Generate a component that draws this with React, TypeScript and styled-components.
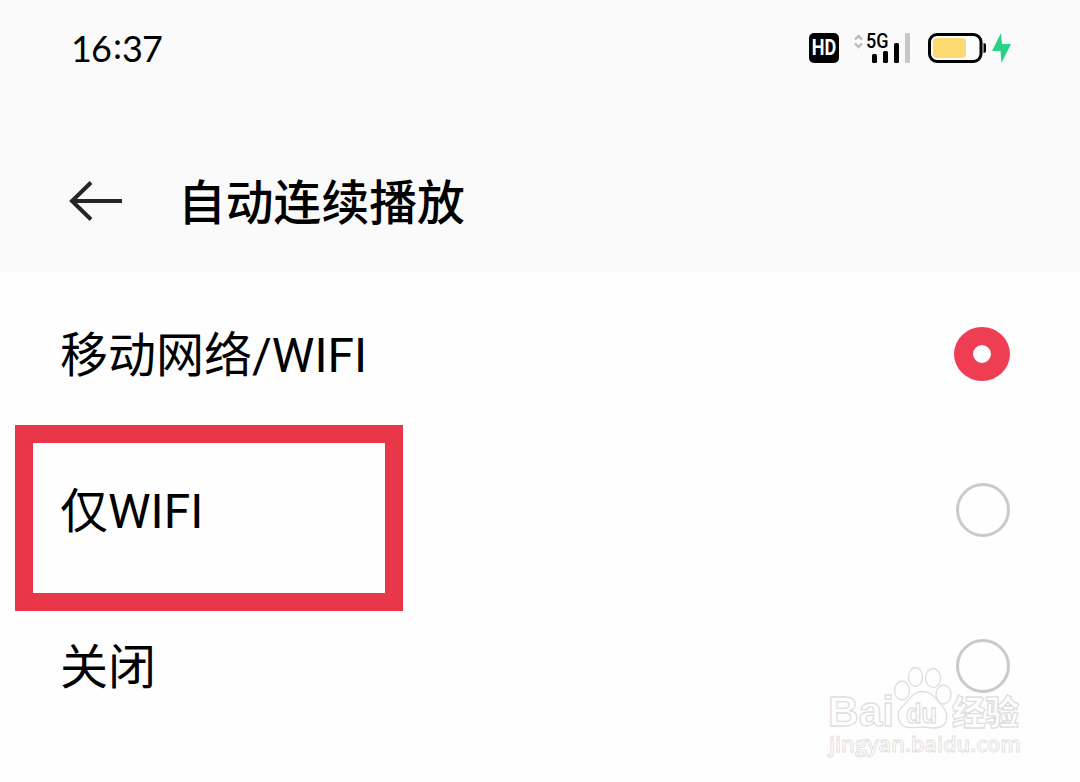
import React from "react";
import styled, { createGlobalStyle } from "styled-components";

const GlobalStyle = createGlobalStyle`
  * { box-sizing: border-box; }
  body {
    margin: 0;
    background: #fefefe;
    color: #000;
    font-family: "Noto Sans CJK SC", sans-serif;
  }
`;

const Screen = styled.main`
  position: relative;
  width: 1080px;
  height: 782px;
  overflow: hidden;
  background: #fefefe;
`;

const Header = styled.header`
  height: 272px;
  background: #fafafa;
`;

const StatusBar = styled.div`
  display: flex;
  align-items: center;
  justify-content: space-between;
  height: 96px;
  padding: 0 66px 0 71px;
`;

const Clock = styled.time`
  display: flex;
  font-family: Lato, sans-serif;
  font-size: 36px;
  line-height: 40px;
  letter-spacing: -0.9px;
`;

const Colon = styled.span`
  padding: 0 1px 3px 2px;
  margin-top: -3px;
`;

const StatusIcons = styled.div`
  display: flex;
  align-items: center;
`;

const HdBadge = styled.span`
  display: flex;
  align-items: center;
  justify-content: center;
  width: 30px;
  height: 30px;
  margin-right: 14px;
  border-radius: 5px;
  background: #000;
  color: #fff;
  font: 700 22px/30px Roboto, sans-serif;
`;

const HdLabel = styled.span`
  transform: scaleX(0.82);
`;

const TitleBar = styled.div`
  display: flex;
  align-items: center;
  height: 212px;
  padding: 0 0 2px 68px;
`;

const BackButton = styled.button`
  display: flex;
  width: 56px;
  height: 44px;
  margin-right: 54px;
  padding: 0;
  border: 0;
  background: none;
`;

const Title = styled.h1`
  margin: 0;
  padding-bottom: 2px;
  font-size: 47.8px;
  font-weight: 500;
  line-height: 64px;
`;

const Options = styled.div`
  padding-top: 4px;
`;

const Option = styled.div`
  display: flex;
  position: relative;
  align-items: center;
  justify-content: space-between;
  height: 156px;
  padding: 0 70px 0 60px;
`;

const OptionText = styled.span`
  padding-top: 4px;
  font-family: Roboto, "Noto Sans CJK SC", sans-serif;
  font-size: 48px;
  line-height: 64px;
  font-weight: 400;
`;

const Radio = styled.span<{ $checked?: boolean }>`
  width: ${(p) => (p.$checked ? 56 : 54)}px;
  height: 54px;
  border: ${(p) => (p.$checked ? "18px solid #ef3d54" : "3px solid #cacaca")};
  border-left-width: ${(p) => (p.$checked ? 19 : 3)}px;
  border-right-width: ${(p) => (p.$checked ? 19 : 3)}px;
  border-radius: 50%;
`;

const Highlight = styled.div`
  position: absolute;
  left: 15px;
  top: -7px;
  width: 388px;
  height: 186px;
  border: 18px solid #e93649;
`;

const Watermark = styled.svg`
  position: absolute;
  left: 820px;
  top: 660px;
`;

const options = [
  { label: "移动网络/WIFI", checked: true },
  { label: "仅WIFI", highlighted: true },
  { label: "关闭" },
];

export default function App() {
  return (
    <Screen>
      <GlobalStyle />
      <Header>
        <StatusBar>
          <Clock>16<Colon>:</Colon>37</Clock>
          <StatusIcons>
            <HdBadge><HdLabel>HD</HdLabel></HdBadge>
            <svg width="75" height="34" viewBox="853 31 75 34" overflow="visible">
              <path d="M855 39.5 858.5 36 862 39.5M855 43.5 858.5 47 862 43.5" fill="none" stroke="#bbb" strokeWidth="2.4" />
              <text x="866" y="48" fontFamily="Roboto" fontSize="20" fontWeight="500" textLength="22.5" lengthAdjust="spacingAndGlyphs">5G</text>
              <rect x="872" y="54" width="5" height="9" rx="1.5" />
              <rect x="883" y="51" width="5" height="12" rx="1.5" />
              <rect x="894" y="43" width="5" height="20" rx="1.5" />
              <rect x="905" y="33" width="5" height="30" rx="1.5" fill="#c6c6c6" />
            </svg>
            <svg width="86" height="34" viewBox="928 31 86 34">
              <rect x="929.5" y="34.5" width="51.5" height="27" rx="7.5" fill="#fdfdfd" stroke="#000" strokeWidth="3" />
              <rect x="933" y="38" width="33" height="20" rx="4" fill="#fbda72" />
              <path d="M983.5 43Q986 43 986 45V51Q986 53 983.5 53Z" />
              <path d="M1001 33 992 51H1000.5L1001.5 63 1011 44H1002Z" fill="#2bd185" />
            </svg>
          </StatusIcons>
        </StatusBar>
        <TitleBar>
          <BackButton aria-label="返回">
            <svg width="56" height="44" viewBox="68 179 56 44" fill="none" stroke="#252525" strokeWidth="4">
              <path d="M122 201H72M91 182.5 72 201 91 219.5" />
            </svg>
          </BackButton>
          <Title>自动连续播放</Title>
        </TitleBar>
      </Header>
      <Options role="radiogroup">
        {options.map((o) => (
          <Option key={o.label} role="radio" aria-checked={!!o.checked}>
            {o.highlighted && <Highlight />}
            <OptionText>{o.label}</OptionText>
            <Radio $checked={o.checked} />
          </Option>
        ))}
      </Options>
      <Watermark width="210" height="104" viewBox="820 660 210 104" fill="#fefefe" stroke="#dedede" strokeWidth="1.3">
        <text x="828" y="726" fontFamily="Liberation Sans" fontWeight="700" fontSize="43" textLength="66" lengthAdjust="spacingAndGlyphs">Bai</text>
        <ellipse cx="902" cy="690.5" rx="7.5" ry="9.5" />
        <ellipse cx="915.5" cy="677" rx="7" ry="9.5" />
        <ellipse cx="933" cy="678" rx="7.5" ry="9.5" />
        <ellipse cx="943.5" cy="694.5" rx="7.5" ry="9.5" />
        <path d="M922 691.5C912 691.5 909 701 902 707C895 713 898 727 909 727.5C916 728 917 727 922 727C927 727 932 729 938 727.5C948 726 949 714 943 707C936 699 932 691.5 922 691.5Z" />
        <text x="906" y="723" fontFamily="Liberation Sans" fontWeight="700" fontSize="27" textLength="31" lengthAdjust="spacingAndGlyphs">du</text>
        <text x="952" y="725" fontFamily="Noto Sans CJK SC" fontWeight="900" fontSize="34" textLength="67" lengthAdjust="spacingAndGlyphs">经验</text>
        <text x="829" y="752" fontFamily="Open Sans" fontWeight="600" fontSize="22" strokeWidth="0.9" textLength="192" lengthAdjust="spacingAndGlyphs">jingyan.baidu.com</text>
      </Watermark>
    </Screen>
  );
}
